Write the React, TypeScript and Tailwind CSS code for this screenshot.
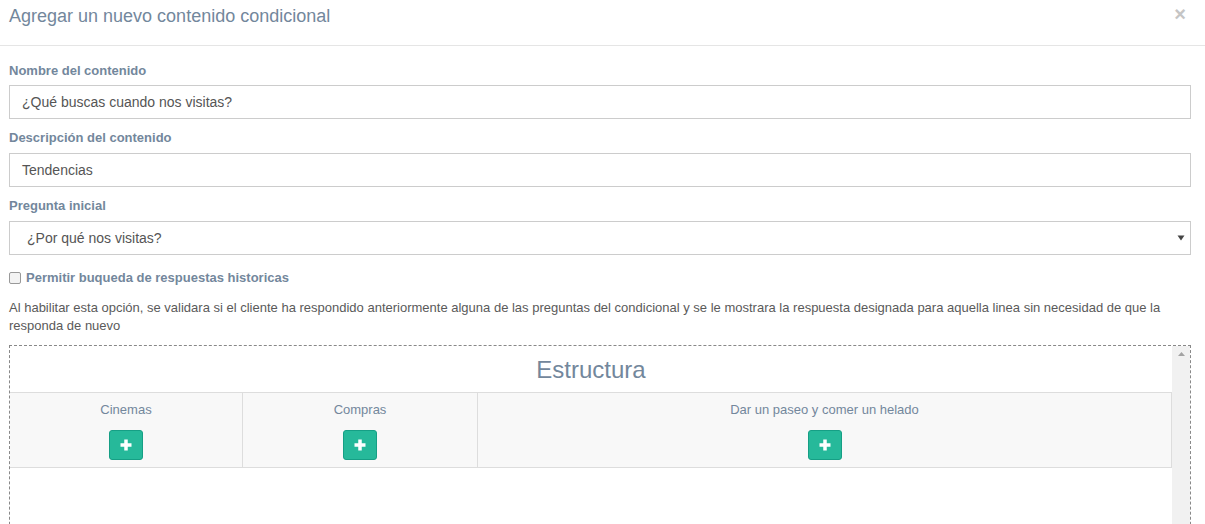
import React from "react";

const font = { fontFamily: '"Liberation Sans", Arial, sans-serif' };

function PlusBtn() {
  return (
    <button className="w-[34px] h-[30px] rounded-[3px] bg-[#26b99a] border border-[#169f85] flex items-center justify-center">
      <svg width="12" height="12" viewBox="0 0 12 12">
        <rect x="4.25" y="0.5" width="3.5" height="11" fill="#fff" />
        <rect x="0.5" y="4.25" width="11" height="3.5" fill="#fff" />
      </svg>
    </button>
  );
}

export default function App() {
  const cols = [
    { name: "Cinemas", w: "w-[232px]" },
    { name: "Compras", w: "w-[235px]" },
    { name: "Dar un paseo y comer un helado", w: "flex-1" },
  ];
  return (
    <div className="w-[1205px] h-[524px] bg-white overflow-hidden text-[#73879c]" style={font}>
      <div className="h-[46px] border-b border-[#e5e5e5] flex items-start justify-between pl-[9px] pr-[19px] pt-[6px]">
        <h4 className="text-[18px] leading-[20px]">Agregar un nuevo contenido condicional</h4>
        <span className="text-[20px] font-bold text-[#c5c5c5] leading-[16px]">×</span>
      </div>
      <div className="px-[9px] pr-[14px]">
        <div className="pt-[17px] text-[13px] font-bold leading-[16px]">Nombre del contenido</div>
        <div className="mt-[6px] h-[34px] border border-[#ccc] flex items-center px-[12px] text-[14px] text-[#555]">¿Qué buscas cuando nos visitas?</div>
        <div className="pt-[11px] text-[13px] font-bold leading-[16px]">Descripción del contenido</div>
        <div className="mt-[7px] h-[34px] border border-[#ccc] flex items-center px-[12px] text-[14px] text-[#555]">Tendencias</div>
        <div className="pt-[11px] text-[13px] font-bold leading-[16px]">Pregunta inicial</div>
        <div className="mt-[7px] h-[34px] border border-[#ccc] flex items-center justify-between pl-[17px] pr-[5px] text-[14px] text-[#555]">
          <span>¿Por qué nos visitas?</span>
          <svg width="8" height="6" viewBox="0 0 8 6"><path d="M0.5 0.5 L7.5 0.5 L4 5.5 Z" fill="#444" /></svg>
        </div>
        <div className="mt-[15px] flex items-center gap-[5px]">
          <span className="w-[12px] h-[12px] rounded-[2px] border border-[#999] bg-[#f3f3f3]" />
          <span className="text-[13px] font-bold leading-[16px]">Permitir buqueda de respuestas historicas</span>
        </div>
        <p className="mt-[13px] text-[13px] leading-[18px] text-[#5a5a5a]">
          Al habilitar esta opción, se validara si el cliente ha respondido anteriormente alguna de las preguntas del condicional y se le mostrara la respuesta designada para aquella linea sin necesidad de que la responda de nuevo
        </p>
        <div className="mt-[10px] h-[200px] border border-dashed border-[#888] flex">
          <div className="flex-1 flex flex-col">
            <div className="h-[46px] flex items-center justify-center text-[24px] text-[#73879c] pt-[1px]">Estructura</div>
            <div className="flex h-[76px] border-y border-[#ddd] bg-[#f8f8f8]">
              {cols.map((c, i) => (
                <div key={c.name} className={`${c.w} flex flex-col items-center pt-[9px] ${i > 0 ? "border-l border-[#ddd]" : ""} ${i === 2 ? "border-r border-[#ddd]" : ""}`}>
                  <span className="text-[13px] leading-[16px] text-[#73879c]">{c.name}</span>
                  <div className="mt-[12px]"><PlusBtn /></div>
                </div>
              ))}
            </div>
          </div>
          <div className="w-[18px] bg-[#f1f1f1] flex justify-center pt-[6px]">
            <svg width="7" height="4" viewBox="0 0 7 4"><path d="M0 4 L3.5 0 L7 4 Z" fill="#a3a3a3" /></svg>
          </div>
        </div>
      </div>
    </div>
  );
}
